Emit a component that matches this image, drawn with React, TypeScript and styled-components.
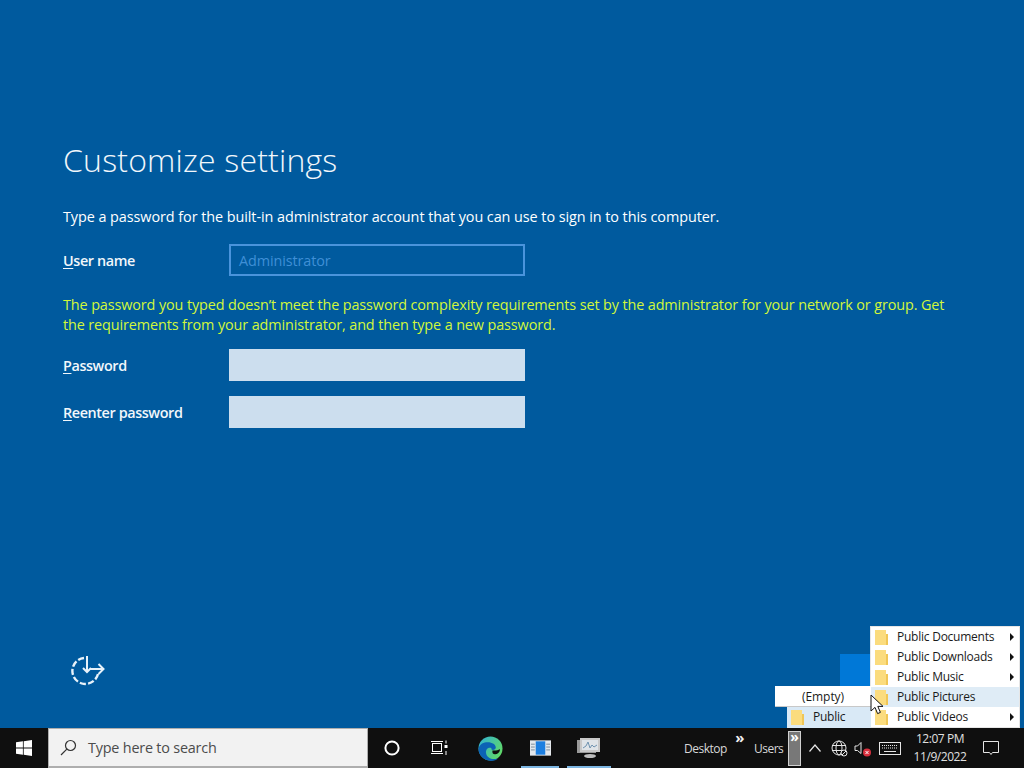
import React from "react";
import styled, { createGlobalStyle } from "styled-components";

const Global = createGlobalStyle`
  html, body { margin: 0; padding: 0; background: #005a9e; }
  * { box-sizing: border-box; }
`;
const font = `"Open Sans", "Noto Sans", "Liberation Sans", sans-serif`;

const Page = styled.div`
  position: relative; width: 1024px; height: 768px; overflow: hidden;
  display: flex; flex-direction: column; background: #005a9e; font-family: ${font};
`;
const Setup = styled.main`
  flex: 1; min-height: 0; display: flex; flex-direction: column; padding: 139px 0 0 63px; color: #fff;
`;
const Title = styled.h1`
  margin: 0; font-size: 32px; line-height: 42px; font-weight: 300; letter-spacing: 0.2px; color: #f2f7fb;
`;
const Intro = styled.p`
  margin: 26px 0 0; font-size: 14.4px; line-height: 20px; letter-spacing: -0.06px; color: #fff;
`;
const Row = styled.div<{ $top: number }>`
  display: flex; align-items: center; height: 32px; margin-top: ${p => p.$top}px;
`;
const Label = styled.label`
  width: 166px; font-size: 14.4px; font-weight: 600; letter-spacing: -0.4px; color: #f2f7fb;
  u { text-decoration-thickness: 1px; text-underline-offset: 2px; }
`;
const Field = styled.div<{ $disabled?: boolean }>`
  width: 296px; height: 32px; padding: 0 8px; display: flex; align-items: center;
  font-size: 14.4px; letter-spacing: -0.1px;
  color: #3f8fd6;
  background: ${p => (p.$disabled ? "transparent" : "#ccdeee")};
  border: ${p => (p.$disabled ? "2px solid #4a94dc" : "none")};
`;
const Warning = styled.p`
  margin: 19px 0 0; width: 900px; font-size: 14.4px; line-height: 20px; letter-spacing: -0.11px; color: #d2f73a;
`;
const ProgressIcon = styled.svg`
  margin: auto 0 40px 7px; width: 36px; height: 36px; flex: none;
`;

const Taskbar = styled.footer`
  height: 40px; flex: none; display: flex; align-items: stretch; background: #0f0f0f; color: #e6e6e6;
`;
const Start = styled.div`
  width: 48px; display: flex; align-items: center; justify-content: center;
`;
const Search = styled.div`
  width: 320px; display: flex; align-items: center; gap: 11px; padding-left: 11px;
  background: #f2f2f2; border: 1px solid #aeaeae; border-bottom-width: 2px;
  color: #4c4c4c; font-size: 14.4px; letter-spacing: -0.2px;
`;
const Cell = styled.div<{ $w: number; $active?: boolean; $end?: boolean }>`
  position: relative; width: ${p => p.$w}px; display: flex; align-items: center;
  justify-content: ${p => (p.$end ? "flex-end" : "center")};
  &::after {
    content: ""; display: ${p => (p.$active ? "block" : "none")};
    position: absolute; left: 4px; right: 4px; bottom: 0; height: 2px; background: #7db6e2;
  }
`;
const Toolbars = styled.div`
  margin-left: auto; display: flex; align-items: stretch;
`;
const ToolLabel = styled.div<{ $w: number }>`
  position: relative; width: ${p => p.$w}px; display: flex; align-items: center;
  font-size: 12px; letter-spacing: -0.5px; color: #d8d8d8;
`;
const More = styled.span`
  position: absolute; right: 10px; top: 2px; font-size: 15px; line-height: 14px; color: #f0f0f0; font-weight: 700;
`;
const Overflow = styled.div`
  width: 13px; height: 35px; margin-top: 3px; background: #787878; border: 1px solid #d0d0d0;
  color: #fff; font-size: 14px; line-height: 10px; font-weight: 700; text-align: center;
`;
const Clock = styled.div`
  width: 78px; display: flex; flex-direction: column; align-items: center; justify-content: center;
  font-size: 12px; line-height: 18px; letter-spacing: -0.45px; color: #e0e0e0;
`;

const Tile = styled.div`
  position: absolute; left: 840px; top: 654px; width: 31px; height: 74px; background: #0078d7;
`;
const Menu = styled.ul`
  position: absolute; margin: 0; padding: 0; list-style: none; background: #fff;
  font-size: 12px; letter-spacing: -0.24px; color: #1a1a1a;
`;
const MainMenu = styled(Menu)`
  left: 871px; top: 627px; width: 148px; height: 100px; box-shadow: 0 0 0 1px #e6e6e6;
`;
const SideEmpty = styled(Menu)`
  left: 775px; top: 686px; width: 96px; height: 21px; border-bottom: 1px solid #c8c8c8;
`;
const SidePublic = styled(Menu)`
  left: 787px; top: 707px; width: 84px; height: 21px; background: #d9e9f6;
`;
const Item = styled.li<{ $hot?: boolean; $arrow?: boolean }>`
  position: relative; height: 20px; display: flex; align-items: center; padding: 0 0 2px 4px; gap: 9px;
  background: ${p => (p.$hot ? "#dfecf6" : "transparent")};
  svg { margin-top: 2px; }
  &::after {
    content: ""; display: ${p => (p.$arrow ? "block" : "none")};
    position: absolute; right: 5px; top: 6px;
    border-left: 4px solid #111; border-top: 4px solid transparent; border-bottom: 4px solid transparent;
  }
`;
const PublicItem = styled(Item)`
  padding-top: 1px;
`;
const EmptyText = styled.li`
  height: 20px; display: flex; align-items: center; justify-content: center; font-size: 12px; letter-spacing: -0.05px;
`;
const Cursor = styled.svg`
  position: absolute; left: 870px; top: 694px; width: 14px; height: 22px;
`;

const Folder = () => (
  <svg width="13" height="15" viewBox="0 0 13 15" style={{ flex: "none" }}>
    <rect x="0" y="0" width="11" height="15" fill="#fbdc7e" />
    <rect x="11" y="4" width="2" height="11" fill="#f0c656" />
  </svg>
);

const Items = [
  ["Public Documents", true],
  ["Public Downloads", true],
  ["Public Music", true],
  ["Public Pictures", false],
  ["Public Videos", true],
] as const;

export default function App() {
  return (
    <Page>
      <Global />
      <Setup>
        <Title>Customize settings</Title>
        <Intro>Type a password for the built-in administrator account that you can use to sign in to this computer.</Intro>
        <Row $top={17}>
          <Label><u>U</u>ser name</Label>
          <Field $disabled>Administrator</Field>
        </Row>
        <Warning>
          The password you typed doesn’t meet the password complexity requirements set by the administrator for your network or group. Get the requirements from your administrator, and then type a new password.
        </Warning>
        <Row $top={14}>
          <Label><u>P</u>assword</Label>
          <Field />
        </Row>
        <Row $top={15}>
          <Label><u>R</u>eenter password</Label>
          <Field />
        </Row>
        <ProgressIcon viewBox="0 0 36 36" fill="none" stroke="#e8f2fa" strokeWidth="2">
          <path d="M14 6A13 13 0 1 0 28 22" strokeWidth="2.4" strokeDasharray="6.2 2.2" />
          <path d="M17 4v16M13 16l4 4 4-4" />
          <path d="M20 17h13.5M28.5 12l5 5-5 5" />
        </ProgressIcon>
      </Setup>
      <Taskbar>
        <Start>
          <svg width="16" height="16" viewBox="0 0 16 16" fill="#fff">
            <path d="M0 2.3 6.9 1.3v6.3H0zM7.7 1.2 16 0v7.6H7.7zM0 8.4h6.9v6.3L0 13.7zM7.7 8.4H16V16l-8.3-1.2z" />
          </svg>
        </Start>
        <Search>
          <svg width="17" height="17" viewBox="0 0 17 17" fill="none" stroke="#333" strokeWidth="1.2" style={{ flex: "none" }}>
            <circle cx="10.5" cy="6.5" r="5" />
            <path d="M6.8 10.2 1 16" />
          </svg>
          <span>Type here to search</span>
        </Search>
        <Cell $w={48}>
          <svg width="16" height="16" viewBox="0 0 16 16" fill="none" stroke="#fff" strokeWidth="2"><circle cx="8" cy="8" r="6.6" /></svg>
        </Cell>
        <Cell $w={48}>
          <svg width="18" height="16" viewBox="0 0 18 16" fill="none" stroke="#fff" strokeWidth="1">
            <rect x="1.5" y="3.5" width="9" height="8" />
            <path d="M0 1.5h12M0 13.5h12M15 .5v3M15 11v4" />
            <rect x="13.5" y="5" width="3" height="3" fill="#fff" stroke="none" />
          </svg>
        </Cell>
        <Cell $w={53}>
          <svg width="25" height="25" viewBox="0 0 26 26">
            <defs>
              <linearGradient id="eg" x1="0" y1="0" x2="1" y2="0.6">
                <stop offset="0" stopColor="#2fb0d8" />
                <stop offset="1" stopColor="#5fd86a" />
              </linearGradient>
            </defs>
            <circle cx="13" cy="13" r="12.5" fill="url(#eg)" />
            <path d="M.6 13C2 8 6 6.5 10 6.5c5 0 8.5 2.5 8.5 5.5 0 1.5-1.5 2.5-3 2.5-1.2 0-2-.8-1.5-2-4-1.2-6.5 2-5.5 6 .8 3.4 4 5.5 8 5.5 2.2 0 4-.4 5-1-2 2-5 3-8 3C6 25.5.3 20 .6 13z" fill="#0c62b5" />
            <path d="M15 15c3 .6 6-.2 7.5-1.5.8 1.6-.6 5-4.5 5.5-2 .2-3.4-1.2-3-4z" fill="#0f0f0f" />
          </svg>
        </Cell>
        <Cell $w={46} $active>
          <svg width="21" height="16" viewBox="0 0 22 16">
            <rect width="22" height="16" fill="#e4e8ec" />
            <rect x="6" y="1" width="10" height="14" fill="#1d7fe0" />
            <path d="M1 4h4M1 7h4M1 10h4M17 4h4M17 7h4M17 10h4" stroke="#7a8a9a" strokeWidth="1" />
          </svg>
        </Cell>
        <Cell $w={52} $active>
          <svg width="24" height="22" viewBox="0 0 24 22">
            <rect x="0" y="3" width="19" height="13" fill="#9a9a9a" />
            <rect x="3" y="1" width="20" height="14" fill="#c8c8c8" />
            <rect x="5" y="3" width="16" height="10" fill="#dfe4e8" />
            <path d="M6 11l3-2 2-4 2 6 2-3 2 2 3-2" fill="none" stroke="#6f93b0" strokeWidth="1" />
            <ellipse cx="13" cy="19" rx="6" ry="2" fill="#bdbdbd" />
          </svg>
        </Cell>
        <Toolbars>
          <ToolLabel $w={70}>Desktop<More>»</More></ToolLabel>
          <ToolLabel $w={34}>Users</ToolLabel>
          <Overflow>»</Overflow>
          <Cell $w={27}>
            <svg width="12" height="8" viewBox="0 0 12 8" fill="none" stroke="#e6e6e6" strokeWidth="1.2"><path d="M.5 7.5 6 1l5.5 6.5" /></svg>
          </Cell>
          <Cell $w={22}>
            <svg width="17" height="17" viewBox="0 0 17 17" fill="none" stroke="#e6e6e6" strokeWidth="1">
              <circle cx="8" cy="8" r="7" />
              <ellipse cx="8" cy="8" rx="3" ry="7" />
              <path d="M1 5.5h14M1 10.5h14" />
              <circle cx="13" cy="13" r="3" fill="#0f0f0f" />
              <path d="M11 15l4-4" />
            </svg>
          </Cell>
          <Cell $w={24}>
            <svg width="18" height="17" viewBox="0 0 18 17" fill="none">
              <path d="M2 6h2.5L8 2.5v11L4.5 10.5H2z" stroke="#e6e6e6" />
              <circle cx="14" cy="12.5" r="4" fill="#d9303e" />
              <path d="M12.5 11l3 3M15.5 11l-3 3" stroke="#fff" />
            </svg>
          </Cell>
          <Cell $w={27} $end>
            <svg width="22" height="13" viewBox="0 0 22 13" fill="none" stroke="#e6e6e6">
              <rect x=".5" y=".5" width="21" height="12" />
              <path d="M3 3.5h16M3 6h16" strokeDasharray="1 1" />
              <path d="M5 9.5h12" />
            </svg>
          </Cell>
          <Clock><span>12:07 PM</span><span>11/9/2022</span></Clock>
          <Cell $w={24}>
            <svg width="16" height="16" viewBox="0 0 16 16" fill="none" stroke="#e6e6e6">
              <path d="M.5 1.5h15v11H9.5L8 14.5 6.5 12.5H.5z" />
            </svg>
          </Cell>
          <Cell $w={21} />
        </Toolbars>
      </Taskbar>
      <Tile />
      <MainMenu>
        {Items.map(([label, arrow], i) => (
          <Item key={label} $arrow={arrow} $hot={i === 3}><Folder />{label}</Item>
        ))}
      </MainMenu>
      <SideEmpty><EmptyText>(Empty)</EmptyText></SideEmpty>
      <SidePublic><PublicItem><Folder />Public</PublicItem></SidePublic>
      <Cursor viewBox="0 0 14 22">
        <path d="M1 1v16l4-3.6 2.6 6.2 2.8-1.2L7.8 12.4H13z" fill="#fff" stroke="#111" strokeWidth="1" />
      </Cursor>
    </Page>
  );
}
